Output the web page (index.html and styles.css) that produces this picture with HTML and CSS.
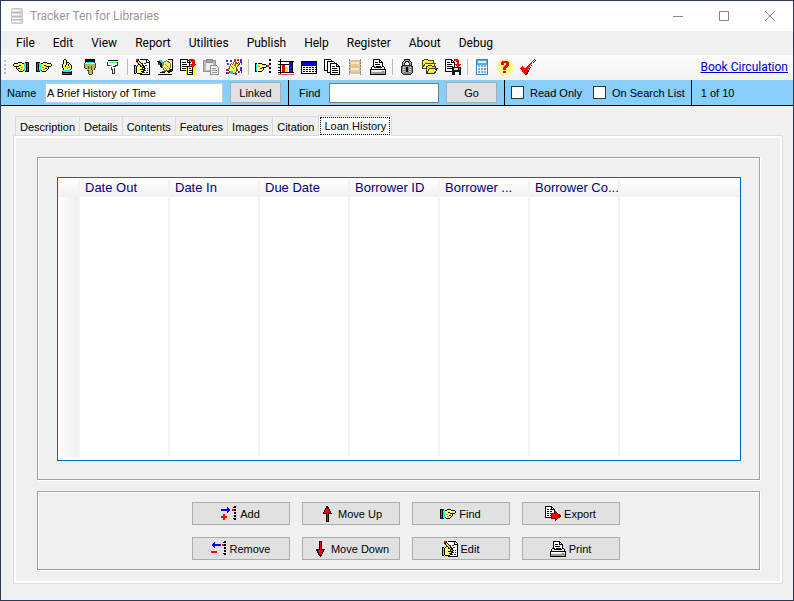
FILE: index.html
```html
<!DOCTYPE html>
<html lang="en">
<head>
<meta charset="utf-8">
<title>Tracker Ten for Libraries</title>
<link rel="stylesheet" href="styles.css">
</head>
<body>
<svg class="defs" aria-hidden="true">
  <symbol id="hand" viewBox="0 0 16 16">
    <path fill="#000" d="M0 3h4v10H0z"/><path fill="#087f86" d="M1 4h1v8H1z"/><path fill="#2ee" d="M3 4h2v8H3z"/>
    <path fill="#ffff60" d="M5 5h2V4h4v1h4v2h-4v1h1v2h-1v1h-1v1H6v-1H5z"/>
    <path fill="#000" d="M5 4h2v1H5zM7 3h4v1H7zM11 4h4v1h-4zM15 5h1v2h-1zM10 7h5v1h-5zM12 8h1v2h-1zM11 10h1v1h-1zM10 11h1v1h-1zM6 12h4v1H6zM8 6h2v1H8zM9 9h2v1H9zM5 11h1v1H5z"/>
    <path fill="#a0a030" d="M6 8h2v1H6zM7 10h2v1H7z"/>
  </symbol>
  <symbol id="hand-left" viewBox="0 0 16 16"><g transform="matrix(-1 0 0 1 16 0)"><use href="#hand" width="16" height="16"/></g></symbol>
  <symbol id="hand-up" viewBox="0 0 16 16"><g transform="rotate(-90 8 8)"><use href="#hand" width="16" height="16"/></g></symbol>
  <symbol id="hand-down" viewBox="0 0 16 16">
    <path fill="#000" d="M3 0h10v4H3z"/><path fill="#2ee" d="M4 3h8v1H4z"/>
    <path fill="#b8b84c" d="M3 5h10v4h-1v2h-2v4H7v-4H5V9H3z"/>
    <path fill="#444" d="M2 4h1v5H2zM13 4h1v5h-1zM3 9h2v1H3zM5 11h2v1H5zM6 12h1v3H6zM7 15h3v1H7zM10 11h1v4h-1zM12 9h1v2h-1zM6 7h1v3H6zM9 7h1v4H9z"/>
  </symbol>
  <symbol id="hand-outline" viewBox="0 0 16 16">
    <path fill="#000" d="M3 1h10v1H3z"/><path fill="#4ef04e" d="M4 3h8v1H4z"/>
    <path fill="none" stroke="#333" d="M2.500 3v3h2M12.500 3v3h-2v1h-3M6.500 8v2h1v4h2v-5"/><path stroke="#999" d="M5 6.500h2"/>
  </symbol>
  <symbol id="edit" viewBox="0 0 16 16">
    <path fill="#fff" stroke="#000" d="M5.500.5h8l2 2v13h-9v-3M12.500.5v3h3M15.500 3v13"/>
    <path stroke="#333" stroke-dasharray="2 1" d="M7 4.500h5M8 6.500h5M10 9.500h4M10 11.500h4M9 13.500h5"/>
    <path fill="#000" d="M0 6h2v9H0z"/><path fill="#2ee" d="M1 7h1v7H1z"/>
    <path fill="#ffff70" stroke="#000" d="M2.500 7.500l2-2h2v2l4 1v2l-1 2-2 2h-4l-1-1z"/><path stroke="#000" d="M6 10.500h4M7 12.500h2"/>
    <path stroke="#000" stroke-width="3" d="M3 1l7 8"/><path stroke="#ffdf20" d="M3 1l6 7"/><path fill="#e00" d="M2 0h2v2H2z"/>
  </symbol>
  <symbol id="write" viewBox="0 0 16 16">
    <path fill="#fff" d="M9 0h7v12H8z"/><path stroke="#000" fill="none" d="M10.500.5h5v11M1 15.500h14M3 13.500h5"/><path fill="#000" d="M0 2l3-1 4 6-3 2zM8 10h7v3l-4 1z"/>
    <path stroke="#19d9d9" stroke-width="2" d="M3 1l5 6"/><path fill="#f2ec68" stroke="#777730" d="M6.500 3.500l3-2 4 3v4l-2 3h-4l-2-3z"/><path stroke="#aaa545" d="M8 5l4 4M7 8l3 3"/><path fill="#159" d="M1 4h2v2H1zM5 12h4v1H5z"/>
  </symbol>
  <symbol id="copy" viewBox="0 0 16 16">
    <path fill="#fff" stroke="#000" d="M.5.5h7l2 2v9h-9zM7.500.5v3h3"/><path stroke="#000" d="M2 3.500h4M2 5.500h5M2 7.500h6M2 9.500h6"/>
    <path fill="#ff0" d="M6 8h10v8H6z"/><path fill="#fff" stroke="#000" d="M7.500 7.500h5v8h-5z"/><path stroke="#000" d="M9 9.500h2M9 11.500h3M9 13.500h3"/><path fill="#f00" d="M9 0h4l2 2v3h1l-3 4-3-4h2V3l-3-1z"/>
  </symbol>
  <symbol id="clipboard" viewBox="0 0 16 16">
    <path fill="#bbb" stroke="#929292" d="M.5 1.500h12v11H.5z"/><path fill="#eee" d="M3 3h7v8H3z"/><path fill="#aaa" stroke="#888" d="M3.500.5h6v3h-6z"/>
    <path fill="#eee" stroke="#929292" d="M7.500 6.500h6l2 2v7h-8z"/><path stroke="#999" d="M9 9.500h4M9 11.500h5M9 13.500h5"/>
  </symbol>
  <symbol id="hand-data" viewBox="0 0 16 16">
    <path stroke="#23f" stroke-width="2" stroke-dasharray="2 2" d="M0 2h8M1 5h5M10 11h6M9 15h4"/><path stroke="#f11" stroke-width="2" stroke-dasharray="2 1" d="M8 1h8M12 5h4M0 11h4M1 14h4M12 13h4"/><path stroke="#23f" stroke-width="2" d="M15 0v4M15 8v3M0 14h2"/>
    <path fill="#ffff58" stroke="#665f20" d="M3.500 7.500l2-3 1 1 2-3 2 1-1 2 3-2 1 1-3 4v4l-2 2h-4l-2-3z"/><path stroke="#998b29" d="M5 7l3 3M8 5l2 3"/><path fill="#2cc" d="M4 12h3v3H4z"/>
  </symbol>
  <symbol id="hand-list" viewBox="0 0 16 16">
    <path fill="#000" d="M0 4h2v9H0z"/><path fill="#2ee" d="M1 5h1v7H1z"/><path fill="#ffff60" d="M2 5h5v1h4v2H8v3H7v1H2z"/>
    <path fill="#000" d="M3 4h4v1H3zM7 5h4v1H7zM11 6h1v2h-1zM7 8h4v1H7zM8 9h1v2H8zM7 11h1v1H7zM3 12h4v1H3zM5 9h2v1H5z"/><path fill="#a0a030" d="M3 7h2v1H3z"/>
    <path fill="#f00" d="M12 6h2v2h-2z"/><path stroke="#000" stroke-width="2" stroke-dasharray="2 2" d="M15 0v16"/>
  </symbol>
  <symbol id="chart" viewBox="0 0 16 16">
    <path fill="#fff" d="M3 3h12v10H3z"/><path stroke="#000" fill="none" d="M2.500 0v16M0 2.500h16M0 13.500h16M0 5.500h15M0 8.500h3M0 11.500h3"/><path stroke="#e55" d="M0 15.500h16"/>
    <path fill="#e00" d="M4 6h3v7H4z"/><path fill="#fe0" d="M7 8h3v5H7z"/><path fill="#11e" d="M11 3h3v10h-3z"/><path stroke="#000" d="M14.500 2v12"/>
  </symbol>
  <symbol id="table" viewBox="0 0 16 16">
    <path fill="#fff" stroke="#000" d="M.5 2.500h15v12H.5z"/><path fill="#00d" d="M1 3h14v3H1z"/><path stroke="#000" stroke-dasharray="2 1" d="M2 8.500h13M2 10.500h13M2 12.500h13"/><path stroke="#000" d="M0 6.500h16"/>
  </symbol>
  <symbol id="pages" viewBox="0 0 16 16">
    <path fill="#fff" stroke="#000" d="M.5.5h6l2 2v9h-8z"/><path fill="#fff" stroke="#000" d="M3.500 2.500h6l2 2v9h-8z"/><path fill="#fff" stroke="#000" d="M6.500 4.500h6l3 3v8h-9zM12.500 4.500v3h3"/><path stroke="#000" d="M8 7.500h3M8 9.500h5M8 11.500h6M8 13.500h6"/>
  </symbol>
  <symbol id="film" viewBox="0 0 16 16">
    <path fill="#d8c5a3" d="M2 1h12v14H2z"/><path fill="#f6e5bd" d="M4 3h8v4H4zM4 9h8v4H4z"/><path fill="#f4c78a" d="M4 5h8v2H4zM4 11h8v2H4z"/><path stroke="#8d8177" stroke-dasharray="2 1" d="M2.500 0v16M13.500 0v16"/>
  </symbol>
  <symbol id="print" viewBox="0 0 16 16">
    <path fill="#fff" stroke="#000" d="M3.500 8V.5h6l3 3V8M9.500.5v3h3"/><path stroke="#000" d="M5 3.500h3M5 5.500h5M6 7.500h5"/>
    <path fill="#e8e8e8" stroke="#000" d="M3.500 7.500h-1l-2 3v5h15v-5l-2-3h-1l-1 1h-6z"/><path stroke="#000" d="M0 10.500h16"/><path fill="#999" d="M1 13h14v2H1z"/><path fill="#fff" d="M2 11h12v1H2z"/><path fill="#f55" d="M12 12h2v1h-2z"/>
  </symbol>
  <symbol id="lock" viewBox="0 0 16 16">
    <path fill="none" stroke="#222" stroke-width="3" d="M4.500 8V4l2-2.500h3l2 2.500v4"/><path fill="none" stroke="#aaa" d="M4.500 8V4l2-2.500h3l2 2.500v4"/>
    <path fill="#888" stroke="#222" d="M3.500 6.500h9l1 2v5l-2 2h-7l-2-2v-5z"/><path stroke="#ccc" stroke-dasharray="2 1" d="M4 8.500h8M4 10.500h8M4 12.500h8"/><path fill="#000" d="M7 8h2v5H7z"/>
  </symbol>
  <symbol id="folders" viewBox="0 0 16 16">
    <path fill="#f5ee35" stroke="#554f00" d="M.5 9.500v-8h1l1-1h3l1 1h5v3M.5 9.500h4"/><path fill="#ffff60" stroke="#554f00" d="M.5 8.500l3-4h10l-3 5h-9z"/><path fill="#f5ee35" stroke="#333" d="M4.500 14.500v-7h1l1-1h3l1 1h3v3M4.500 14.500l3-5h8l-3 5z"/>
  </symbol>
  <symbol id="save-report" viewBox="0 0 16 16">
    <path fill="#fff" stroke="#000" d="M.5.5h6l3 3v9h-9zM6.500.5v3h3"/><path stroke="#000" d="M2 3.500h3M2 5.500h5M2 7.500h6M2 9.500h5"/>
    <path fill="#111" d="M7 8h9v8H7z"/><path fill="#f00" d="M9 0h3l2 2v3h2l-3 4-3-4h2V3L9 2z"/><path fill="#ddd" d="M9 9h4v2H9z"/><path fill="#fff" d="M10 13h4v3h-4z"/><path fill="#666" d="M14 9h1v2h-1z"/>
  </symbol>
  <symbol id="calculator" viewBox="0 0 16 16">
    <path fill="#59aee5" stroke="#3b83ba" d="M2.500.5h11v15h-11z"/><path fill="#d7f2ff" d="M4 2h8v2H4z"/><path fill="#edf8ff" d="M3 6h10v9H3z"/><path stroke="#72b4e2" stroke-width="2" stroke-dasharray="2 1" d="M4 7h8M4 10h8M4 13h8"/><path fill="#e65f4f" d="M10 9h2v2h-2z"/>
  </symbol>
  <symbol id="help" viewBox="0 0 16 16">
    <circle cx="8" cy="8" r="8" fill="#ffff88"/><path fill="#e01010" d="M4 3h1V2h6v1h1v4h-1v1h-1v1H9v2H6V8h1V7h1V6h1V4H7v2H4zM6 12h3v2H6z"/>
  </symbol>
  <symbol id="check" viewBox="0 0 16 16"><path fill="#400" d="M15 1h1l-4 5-5 10H5l6-9z"/><path fill="#f00" d="M0 9l3-2 2 3 5-6 5-4-5 7-4 8H4z"/></symbol>
  <symbol id="add" viewBox="0 0 16 16"><path fill="#00f" d="M0 3h6V1l4 3-4 3V5H0z"/><path fill="#f00" d="M11 3h2v2h-2zM2 8h2v2h2v2H4v2H2v-2H0v-2h2z"/><path stroke="#000" stroke-width="2" stroke-dasharray="2 1" d="M14 0v14"/><path fill="#000" d="M12 1h1v1h-1zM12 12h1v1h-1z"/></symbol>
  <symbol id="remove" viewBox="0 0 16 16"><path fill="#00f" d="M10 3H4V1L0 4l4 3V5h6z"/><path fill="#f00" d="M11 3h2v2h-2zM0 10h6v2H0z"/><path stroke="#000" stroke-width="2" stroke-dasharray="2 1" d="M14 0v14"/><path fill="#000" d="M12 1h1v1h-1zM12 12h1v1h-1z"/></symbol>
  <symbol id="up" viewBox="0 0 16 16"><path fill="#f00" stroke="#000" d="M8.500.5l4 7h-3v8h-2v-8h-3l3-7z"/></symbol>
  <symbol id="down" viewBox="0 0 16 16"><path fill="#f00" stroke="#000" d="M7.500.5h2v8h3l-4 7-1-1-3-6h3z"/></symbol>
  <symbol id="export" viewBox="0 0 16 16"><path fill="#fff" stroke="#000" d="M.5.5h6l3 3v8h-9zM6.500.5v3h3"/><path stroke="#000" stroke-dasharray="2 1" d="M2 3.500h4M2 5.500h5M2 7.500h4M2 9.500h4"/><path fill="#f00" stroke="#900" d="M6.500 7.500h4v-2l5 4.500-5 4.500v-2h-4z"/></symbol>
  <symbol id="database" viewBox="0 0 16 16">
    <path fill="#ddd" stroke="#c8c8c8" d="M2.500 1.500l2-1h7l2 1v13l-2 1h-7l-2-1z"/><path stroke="#fff" d="M3 2.500h7M3 6.500h7M3 10.500h7M3 13.500h7"/><path stroke="#b8b8b8" d="M3 4.500h10M3 8.500h10M3 11.500h10"/>
  </symbol>
</svg>

<div class="window">
  <header class="titlebar">
    <svg class="icon"><use href="#database"/></svg>
    <h1>Tracker Ten for Libraries</h1>
    <div class="controls">
      <button type="button" aria-label="Minimize"><svg viewBox="0 0 10 10"><path d="M0 5.500h10"/></svg></button>
      <button type="button" aria-label="Maximize"><svg viewBox="0 0 10 10"><path d="M.5.5h9v9h-9z"/></svg></button>
      <button type="button" aria-label="Close"><svg class="smooth" viewBox="0 0 10 10"><path d="M0 0l10 10M10 0L0 10"/></svg></button>
    </div>
  </header>

  <nav class="menu">
    <button type="button">File</button><button type="button">Edit</button><button type="button">View</button><button type="button">Report</button><button type="button">Utilities</button><button type="button">Publish</button><button type="button">Help</button><button type="button">Register</button><button type="button">About</button><button type="button">Debug</button>
  </nav>

  <div class="toolbar">
    <span class="grip"></span>
    <button type="button" aria-label="Previous"><svg class="icon"><use href="#hand-left"/></svg></button>
    <button type="button" aria-label="Next"><svg class="icon"><use href="#hand"/></svg></button>
    <button type="button" aria-label="First"><svg class="icon"><use href="#hand-up"/></svg></button>
    <button type="button" aria-label="Last"><svg class="icon"><use href="#hand-down"/></svg></button>
    <button type="button" aria-label="Go to"><svg class="icon"><use href="#hand-outline"/></svg></button>
    <span class="sep"></span>
    <button type="button" aria-label="Edit record"><svg class="icon"><use href="#edit"/></svg></button>
    <button type="button" aria-label="Write"><svg class="icon"><use href="#write"/></svg></button>
    <button type="button" aria-label="Copy"><svg class="icon"><use href="#copy"/></svg></button>
    <button type="button" aria-label="Paste"><svg class="icon"><use href="#clipboard"/></svg></button>
    <button type="button" aria-label="Pick data"><svg class="icon"><use href="#hand-data"/></svg></button>
    <span class="sep"></span>
    <button type="button" aria-label="Find in list"><svg class="icon"><use href="#hand-list"/></svg></button>
    <button type="button" aria-label="Chart"><svg class="icon"><use href="#chart"/></svg></button>
    <button type="button" aria-label="Table"><svg class="icon"><use href="#table"/></svg></button>
    <button type="button" aria-label="Reports"><svg class="icon"><use href="#pages"/></svg></button>
    <button type="button" aria-label="Slides"><svg class="icon"><use href="#film"/></svg></button>
    <button type="button" aria-label="Print"><svg class="icon"><use href="#print"/></svg></button>
    <span class="sep"></span>
    <button type="button" aria-label="Lock"><svg class="icon"><use href="#lock"/></svg></button>
    <button type="button" aria-label="Folders"><svg class="icon"><use href="#folders"/></svg></button>
    <button type="button" aria-label="Save report"><svg class="icon"><use href="#save-report"/></svg></button>
    <span class="sep"></span>
    <button type="button" aria-label="Calculator"><svg class="icon"><use href="#calculator"/></svg></button>
    <button type="button" aria-label="Help"><svg class="icon"><use href="#help"/></svg></button>
    <button type="button" aria-label="Check"><svg class="icon"><use href="#check"/></svg></button>
    <a class="link" href="#circulation">Book Circulation</a>
  </div>

  <form class="record">
    <div class="group name">
      <label for="name">Name</label>
      <input class="text" id="name" type="text" value="A Brief History of Time">
      <button class="button" type="button">Linked</button>
    </div>
    <div class="group find">
      <label for="find">Find</label>
      <input class="text" id="find" type="text">
      <button class="button" type="button">Go</button>
    </div>
    <div class="group flags">
      <label><input type="checkbox">Read Only</label>
      <label><input type="checkbox">On Search List</label>
    </div>
    <output class="group count">1 of 10</output>
  </form>

  <main>
    <div class="tabs" role="tablist">
      <button type="button" role="tab">Description</button><button type="button" role="tab">Details</button><button type="button" role="tab">Contents</button><button type="button" role="tab">Features</button><button type="button" role="tab">Images</button><button type="button" role="tab">Citation</button><button type="button" role="tab" aria-selected="true"><span>Loan History</span></button>
    </div>
    <div class="page" role="tabpanel">
      <section class="panel loans">
        <table>
          <thead><tr><td></td><th>Date Out</th><th>Date In</th><th>Due Date</th><th>Borrower ID</th><th>Borrower ...</th><th>Borrower Co...</th><td class="rest"></td></tr></thead>
          <tbody><tr><td></td><td></td><td></td><td></td><td></td><td></td><td></td><td class="rest"></td></tr></tbody>
        </table>
      </section>
      <section class="panel actions">
        <button class="button" type="button"><svg class="icon"><use href="#add"/></svg>Add</button>
        <button class="button" type="button"><svg class="icon"><use href="#up"/></svg>Move Up</button>
        <button class="button" type="button"><svg class="icon"><use href="#hand"/></svg>Find</button>
        <button class="button" type="button"><svg class="icon"><use href="#export"/></svg>Export</button>
        <button class="button" type="button"><svg class="icon"><use href="#remove"/></svg>Remove</button>
        <button class="button" type="button"><svg class="icon"><use href="#down"/></svg>Move Down</button>
        <button class="button" type="button"><svg class="icon"><use href="#edit"/></svg>Edit</button>
        <button class="button" type="button"><svg class="icon"><use href="#print"/></svg>Print</button>
      </section>
    </div>
  </main>
</div>
</body>
</html>
```
FILE: styles.css
```css
* { box-sizing: border-box; }

body {
  margin: 0;
  background: #f0f0f0;
  color: #000;
  font: 11px/16px "Liberation Sans", Arial, sans-serif;
}

button, input { font: inherit; color: inherit; margin: 0; padding: 0; }
button { border: 0; background: none; }

.defs { position: absolute; width: 0; height: 0; }
.icon { display: block; flex: none; width: 16px; height: 16px; shape-rendering: crispEdges; fill: none; }

.window {
  display: flex;
  flex-direction: column;
  min-height: 100vh;
  border: 1px solid #2b3b52;
}

.titlebar, .menu, .toolbar { font: 12px/16px Roboto, "Open Sans", sans-serif; }
.titlebar { display: flex; align-items: center; height: 30px; padding-left: 8px; gap: 5px; background: #fff; }
.titlebar h1 { margin: 0; font: inherit; color: #999; }
.controls { display: flex; margin-left: auto; }
.controls button { display: flex; align-items: center; justify-content: center; width: 46px; height: 30px; }
.controls svg { width: 10px; height: 10px; stroke: #888; fill: none; shape-rendering: crispEdges; }
.controls .smooth { shape-rendering: auto; overflow: visible; }

.menu { display: flex; height: 24px; padding-left: 6px; }
.menu button { padding: 0 9px; }

.toolbar { display: flex; align-items: center; height: 25px; padding: 0 5px 1px 3px; background: linear-gradient(#fdfdfd, #f2f2f2); }
.toolbar button { display: flex; align-items: center; justify-content: center; width: 23px; height: 24px; }
.grip { width: 2px; height: 15px; margin-right: 3px; background: repeating-linear-gradient(#bbb 0 2px, transparent 2px 4px); }
.sep { width: 1px; height: 16px; margin: 0 2px 0 3px; background: #bdbdbd; }
.link { margin-left: auto; color: #00c; }

.record { display: flex; height: 26px; background: #87cefa; border-bottom: 1px solid #000; }
.group { display: flex; align-items: center; padding: 0 7px 0 10px; border-right: 1px solid #000; }
.group .text { height: 20px; padding: 0 1px; border: 1px solid #7a7a7a; background: #fff; border-radius: 0; }
.group .button { width: 51px; height: 21px; margin-left: 7px; }
.name { padding-left: 6px; }
.name label { width: 38px; }
.name .text { width: 178px; border-color: #bcd; }
.find label { width: 30px; }
.find .text { width: 110px; }
.flags { padding: 0 6px; gap: 11px; }
.flags label { display: flex; align-items: center; gap: 6px; }
.flags input { appearance: none; width: 13px; height: 13px; border: 1px solid #333; background: #fff; }
.count { padding-left: 9px; border: 0; }

.button { display: flex; align-items: center; justify-content: center; gap: 3px; border: 1px solid #adadad; background: #e1e1e1; }

main { display: flex; flex: 1; flex-direction: column; padding: 9px 10px 16px 12px; }
.tabs { display: flex; align-items: flex-end; padding-left: 2px; }
.tabs button { height: 19px; padding: 1px 4px 0; border: 1px solid #d9d9d9; border-width: 1px 0 0 1px; }
.tabs [aria-selected] { height: 21px; margin-bottom: -1px; padding: 1px 1px 2px; border-width: 1px 1px 0; background: #fff; z-index: 1; }
.tabs span { display: block; padding: 0 3px; border: 1px dotted #000; line-height: 16px; }

.page {
  display: flex;
  flex: 1;
  flex-direction: column;
  gap: 11px;
  padding: 21px 22px 13px 23px;
  border: 1px solid #dcdcdc;
  box-shadow: inset 0 0 0 2px #fff;
}

.panel { border: 1px solid #a0a0a0; box-shadow: inset 1px 1px #fff, 1px 1px #fff; }
.loans { display: flex; flex: 1; padding: 19px 18px 18px 19px; }
.actions { display: grid; grid-template-columns: repeat(4, 98px); gap: 12px; justify-content: center; padding: 10px 0 9px 14px; }
.actions .button { height: 23px; }

table { flex: 1; table-layout: fixed; width: 100%; padding: 1px 0 3px; border: 1px solid #0067c0; border-collapse: separate; border-spacing: 0; background: #fff; }
thead tr { height: 18px; background: linear-gradient(#fff, #f1f1f1); }
th, td { padding: 0; border-right: 2px solid #f3f3f3; }
th { width: 90px; padding-left: 5px; color: #000080; font: 13px/18px "Liberation Sans", sans-serif; text-align: left; white-space: nowrap; }
thead td:first-child { width: 22px; }
tbody td:first-child { background: linear-gradient(90deg, #fff, #eee); }
.rest { border: 0; }
```
